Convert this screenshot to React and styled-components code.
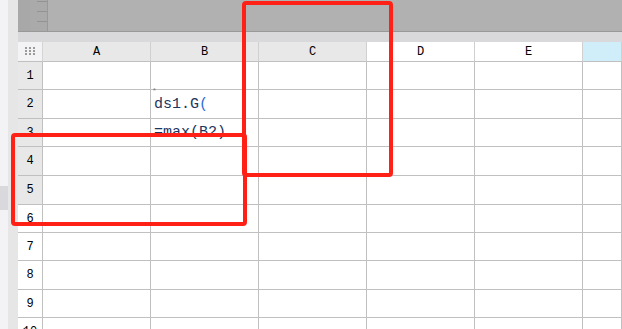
import styled, { createGlobalStyle } from "styled-components";

const GlobalStyle = createGlobalStyle`
  html, body {
    margin: 0;
    padding: 0;
    width: 622px;
    height: 329px;
    overflow: hidden;
    background: #ffffff;
    font-family: "Liberation Mono", "DejaVu Sans Mono", monospace;
  }
`;

const Page = styled.div`
  position: relative;
  width: 622px;
  height: 329px;
  display: flex;
  overflow: hidden;
`;

const Rail = styled.div`
  width: 8px;
  flex: none;
  display: flex;
  flex-direction: column;
  background: #f3f3f5;
  padding-top: 186px;
`;

const RailThumb = styled.div`
  height: 24px;
  background: #d9d9dd;
`;

const Gutter = styled.div`
  width: 10px;
  flex: none;
  background: #e6e6e6;
`;

const Main = styled.div`
  flex: 1;
  display: flex;
  flex-direction: column;
  min-width: 0;
`;

const TopBar = styled.div`
  height: 31px;
  flex: none;
  display: flex;
  background: #b1b1b1;
  border-bottom: 1px solid #999999;
`;

const Ruler = styled.div`
  width: 29px;
  flex: none;
  display: flex;
  background: #aaaaaa;
  border-right: 1px solid #999999;
`;

const RulerEdge = styled.div`
  width: 12px;
  background: #a8a8a8;
`;

const RulerTicks = styled.div`
  flex: 1;
  display: flex;
  flex-direction: column;
  align-items: flex-end;
  gap: 9px;
  padding-top: 1px;
`;

const Tick = styled.div`
  width: 10px;
  height: 1px;
  background: #939393;
`;

const Strip = styled.div`
  height: 10px;
  flex: none;
  background: #d9d9dc;
`;

const Sheet = styled.div`
  display: grid;
  grid-template-columns: 25px repeat(5, 108px) 1fr;
  grid-template-rows: 20px 28px 29px 28px 29px 29px 28px 28px 29px 28px 28px;
`;

const Corner = styled.div`
  background: #f3f3f5;
  border-right: 1px solid #d4d4d4;
  border-bottom: 1px solid #c0c0c0;
  display: flex;
  align-items: center;
  justify-content: center;
`;

const ColHead = styled.div`
  background: ${(p) => p.$bg};
  border-right: 1px solid #d0d0d0;
  border-bottom: 1px solid #c0c0c0;
  display: flex;
  align-items: center;
  justify-content: center;
  font-size: 12px;
  color: #000;
`;

const RowHead = styled.div`
  background: ${(p) => (p.$active ? "#e8e8e8" : "#ffffff")};
  border-right: 1px solid #c0c0c0;
  border-bottom: 1px solid #c0c0c0;
  display: flex;
  align-items: center;
  justify-content: center;
  font-size: 12px;
  color: #000;
`;

const Cell = styled.div`
  position: relative;
  background: #ffffff;
  border-right: 1px solid #c0c0c0;
  border-bottom: 1px solid #c0c0c0;
  display: flex;
  align-items: center;
  padding-left: 3px;
  font-size: 15px;
  color: #1c355e;
  white-space: nowrap;
  overflow: visible;
`;

const Paren = styled.span`
  color: #2b6cd6;
`;

const Mark = styled.span`
  position: absolute;
  left: 1px;
  top: -3px;
  font-size: 8px;
  line-height: 8px;
  color: #777777;
`;

const Callout = styled.div`
  position: absolute;
  border: 4px solid #ff2116;
  border-radius: 4px;
  pointer-events: none;
`;

const Dots = () => (
  <svg width="11" height="9" viewBox="0 0 11 9">
    {[0, 4, 8].map((x) =>
      [0, 3, 6].map((y) => (
        <rect key={`${x}-${y}`} x={x} y={y} width="2" height="2" fill="#9a9a9a" />
      ))
    )}
  </svg>
);

const columns = [
  { name: "A", bg: "#e8e8e8" },
  { name: "B", bg: "#e8e8e8" },
  { name: "C", bg: "#e8e8e8" },
  { name: "D", bg: "#ffffff" },
  { name: "E", bg: "#ffffff" },
  { name: "", bg: "#d0eef9" },
];

const cellContent = (row, col) => {
  if (row === 2 && col === 1)
    return (
      <>
        <Mark>*</Mark>
        ds1.G<Paren>(</Paren>
      </>
    );
  if (row === 3 && col === 1) return "=max(B2)";
  return null;
};

export default function App() {
  const rows = Array.from({ length: 10 }, (_, i) => i + 1);
  return (
    <>
      <GlobalStyle />
      <Page>
        <Rail>
          <RailThumb />
        </Rail>
        <Gutter />
        <Main>
          <TopBar>
            <Ruler>
              <RulerEdge />
              <RulerTicks>
                <Tick />
                <Tick />
                <Tick />
              </RulerTicks>
            </Ruler>
          </TopBar>
          <Strip />
          <Sheet>
            <Corner>
              <Dots />
            </Corner>
            {columns.map((c, i) => (
              <ColHead key={i} $bg={c.bg}>
                {c.name}
              </ColHead>
            ))}
            {rows.map((r) => [
              <RowHead key={`h${r}`} $active={r <= 5}>
                {r}
              </RowHead>,
              ...columns.map((c, ci) => (
                <Cell key={`${r}-${ci}`}>{cellContent(r, ci)}</Cell>
              )),
            ])}
          </Sheet>
        </Main>
        <Callout style={{ left: 242, top: 1, width: 143, height: 168 }} />
        <Callout style={{ left: 11, top: 133, width: 228, height: 85 }} />
      </Page>
    </>
  );
}
